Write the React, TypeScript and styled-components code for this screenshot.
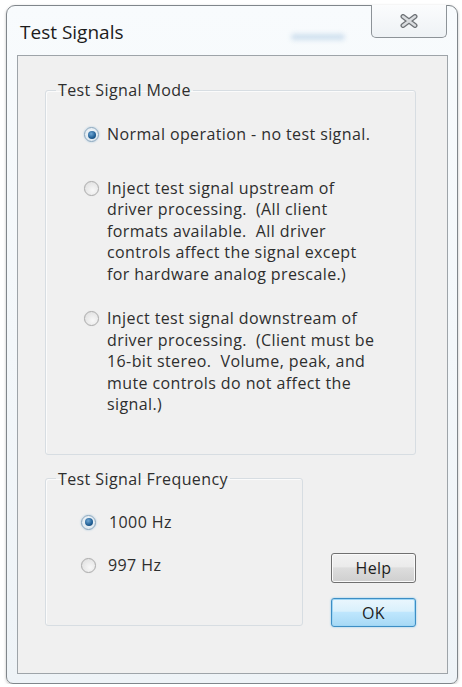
import React from "react";
import styled, { createGlobalStyle } from "styled-components";

const Global = createGlobalStyle`
  html, body { margin: 0; padding: 0; background: #ffffff; }
  body { font-family: "Open Sans", "Noto Sans", "DejaVu Sans", sans-serif; color: #2e2e2e; }
  * { box-sizing: border-box; }
`;

const Window = styled.div`
  margin: 5px 0 0 6px;
  width: 452px;
  height: 679px;
  border: 1px solid #80868b;
  border-radius: 9px 9px 7px 7px;
  background: linear-gradient(180deg, #f8fbfd 0%, #eef3f7 100%);
  box-shadow: 0 1px 3px rgba(0, 0, 0, 0.25);
  display: flex;
  flex-direction: column;
`;

const TitleBar = styled.div`
  height: 49px;
  display: flex;
  align-items: flex-start;
  flex-shrink: 0;
`;

const Title = styled.div`
  margin: 14px 0 0 13px;
  font-size: 19px;
  line-height: 24px;
  color: #1c1c1c;
`;

const Smudge = styled.div`
  margin: 28px 26px 0 auto;
  width: 54px;
  height: 6px;
  border-radius: 3px;
  background: #c3d8ea;
  filter: blur(2.5px);
  opacity: 0.8;
`;

const CloseButton = styled.div`
  margin: -1px 10px 0 0;
  width: 76px;
  height: 33px;
  border: 1px solid #8d9398;
  border-top: none;
  border-radius: 0 0 5px 5px;
  background: linear-gradient(180deg, #fbfcfd 0%, #eef2f5 100%);
  display: flex;
  align-items: center;
  justify-content: center;
`;

const Client = styled.div`
  flex: 1;
  margin: 0 9px 9px 10px;
  border: 1px solid #9ea4a9;
  background: #f0f0f0;
  padding: 24px 31px 46px 27px;
  display: flex;
  flex-direction: column;
`;

const Group = styled.fieldset<{ $width?: number }>`
  margin: 0;
  padding: 0;
  border: 1px solid #d7dde2;
  border-radius: 3px;
  box-shadow: inset 1px 1px 0 #fbfbfb;
  width: ${(p) => (p.$width ? `${p.$width}px` : "auto")};
  min-width: 0;
`;

const Legend = styled.legend`
  margin-left: 10px;
  padding: 0 2px;
  font-size: 16px;
  letter-spacing: 0.4px;
  line-height: 20px;
  color: #2e2e2e;
`;

const GroupBody = styled.div<{ $pad: string }>`
  padding: ${(p) => p.$pad};
`;

const Option = styled.div<{ $after?: number; $gap: number }>`
  display: grid;
  grid-template-columns: 15px auto;
  column-gap: ${(p) => p.$gap}px;
  align-items: start;
  margin-bottom: ${(p) => p.$after ?? 0}px;
`;

const RadioCell = styled.div`
  height: 21.5px;
  display: flex;
  align-items: center;
`;

const Radio = styled.span<{ $checked?: boolean }>`
  width: 15px;
  height: 15px;
  border-radius: 50%;
  display: flex;
  align-items: center;
  justify-content: center;
  border: 1px solid ${(p) => (p.$checked ? "#8aa6bd" : "#ababab")};
  background: ${(p) =>
    p.$checked
      ? "radial-gradient(circle at 50% 40%, #f4f8fb 0%, #d7e3ec 100%)"
      : "radial-gradient(circle at 60% 65%, #f8f8f8 0%, #dcdcdc 100%)"};
  box-shadow: ${(p) => (p.$checked ? "0 0 2px #9fc2dd" : "0 0 1px #d0d0d0")};
`;

const Dot = styled.span`
  width: 8px;
  height: 8px;
  border-radius: 50%;
  background: radial-gradient(circle at 40% 35%, #6fa8d6 0%, #1f5d93 60%, #173f66 100%);
`;

const Label = styled.div`
  font-size: 16px;
  letter-spacing: 0.4px;
  line-height: 21.5px;
  white-space: pre;
  color: #2e2e2e;
`;

const BottomRow = styled.div`
  margin-top: 14px;
  display: flex;
  align-items: flex-end;
`;

const ButtonColumn = styled.div`
  margin: 0 0 -1px 28px;
  display: flex;
  flex-direction: column;
  gap: 15px;
`;

const Button = styled.div<{ $default?: boolean; $h: number }>`
  width: 85px;
  height: ${(p) => p.$h}px;
  border-radius: 3px;
  border: 1px solid ${(p) => (p.$default ? "#3d8ec4" : "#707070")};
  background: ${(p) =>
    p.$default
      ? "linear-gradient(180deg, #eaf6fd 0%, #d9f0fc 45%, #bee6fd 50%, #a7d9f5 100%)"
      : "linear-gradient(180deg, #f2f2f2 0%, #ebebeb 45%, #dddddd 50%, #cfcfcf 100%)"};
  box-shadow: ${(p) =>
    p.$default ? "inset 0 0 0 1px #9fd6f5, 0 0 2px #7cc0ea" : "inset 0 0 0 1px #fafafa"};
  display: flex;
  align-items: center;
  justify-content: center;
  font-size: 16px;
  letter-spacing: 0.3px;
  color: #1e1e1e;
`;

type Opt = { text: string; checked?: boolean; after?: number; gap?: number };

const RadioOption: React.FC<Opt> = ({ text, checked, after, gap = 8 }) => (
  <Option $after={after} $gap={gap}>
    <RadioCell>
      <Radio $checked={checked}>{checked && <Dot />}</Radio>
    </RadioCell>
    <Label>{text}</Label>
  </Option>
);

const CloseGlyph = () => (
  <svg width="18" height="14" viewBox="0 0 18 14">
    <path d="M3 2.5 L15 11.5 M15 2.5 L3 11.5" stroke="#6f7377" strokeWidth="5" strokeLinecap="round" />
    <path d="M3 2.5 L15 11.5 M15 2.5 L3 11.5" stroke="#d9dcdf" strokeWidth="2.4" strokeLinecap="round" />
  </svg>
);

export default function App() {
  return (
    <>
      <Global />
      <Window>
        <TitleBar>
          <Title>Test Signals</Title>
          <Smudge />
          <CloseButton>
            <CloseGlyph />
          </CloseButton>
        </TitleBar>
        <Client>
          <Group>
            <Legend>Test Signal Mode</Legend>
            <GroupBody $pad="24px 0 38px 38px">
              <RadioOption checked text="Normal operation - no test signal." after={32} />
              <RadioOption
                after={23}
                text={
                  "Inject test signal upstream of\ndriver processing.  (All client\nformats available.  All driver\ncontrols affect the signal except\nfor hardware analog prescale.)"
                }
              />
              <RadioOption
                text={
                  "Inject test signal downstream of\ndriver processing.  (Client must be\n16-bit stereo.  Volume, peak, and\nmute controls do not affect the\nsignal.)"
                }
              />
            </GroupBody>
          </Group>
          <BottomRow>
            <Group $width={259}>
              <Legend>Test Signal Frequency</Legend>
              <GroupBody $pad="23px 0 49px 35px">
                <RadioOption checked gap={13} text="1000 Hz" after={21.5} />
                <RadioOption gap={12} text="997 Hz" />
              </GroupBody>
            </Group>
            <ButtonColumn>
              <Button $h={30}>Help</Button>
              <Button $default $h={29}>OK</Button>
            </ButtonColumn>
          </BottomRow>
        </Client>
      </Window>
    </>
  );
}
